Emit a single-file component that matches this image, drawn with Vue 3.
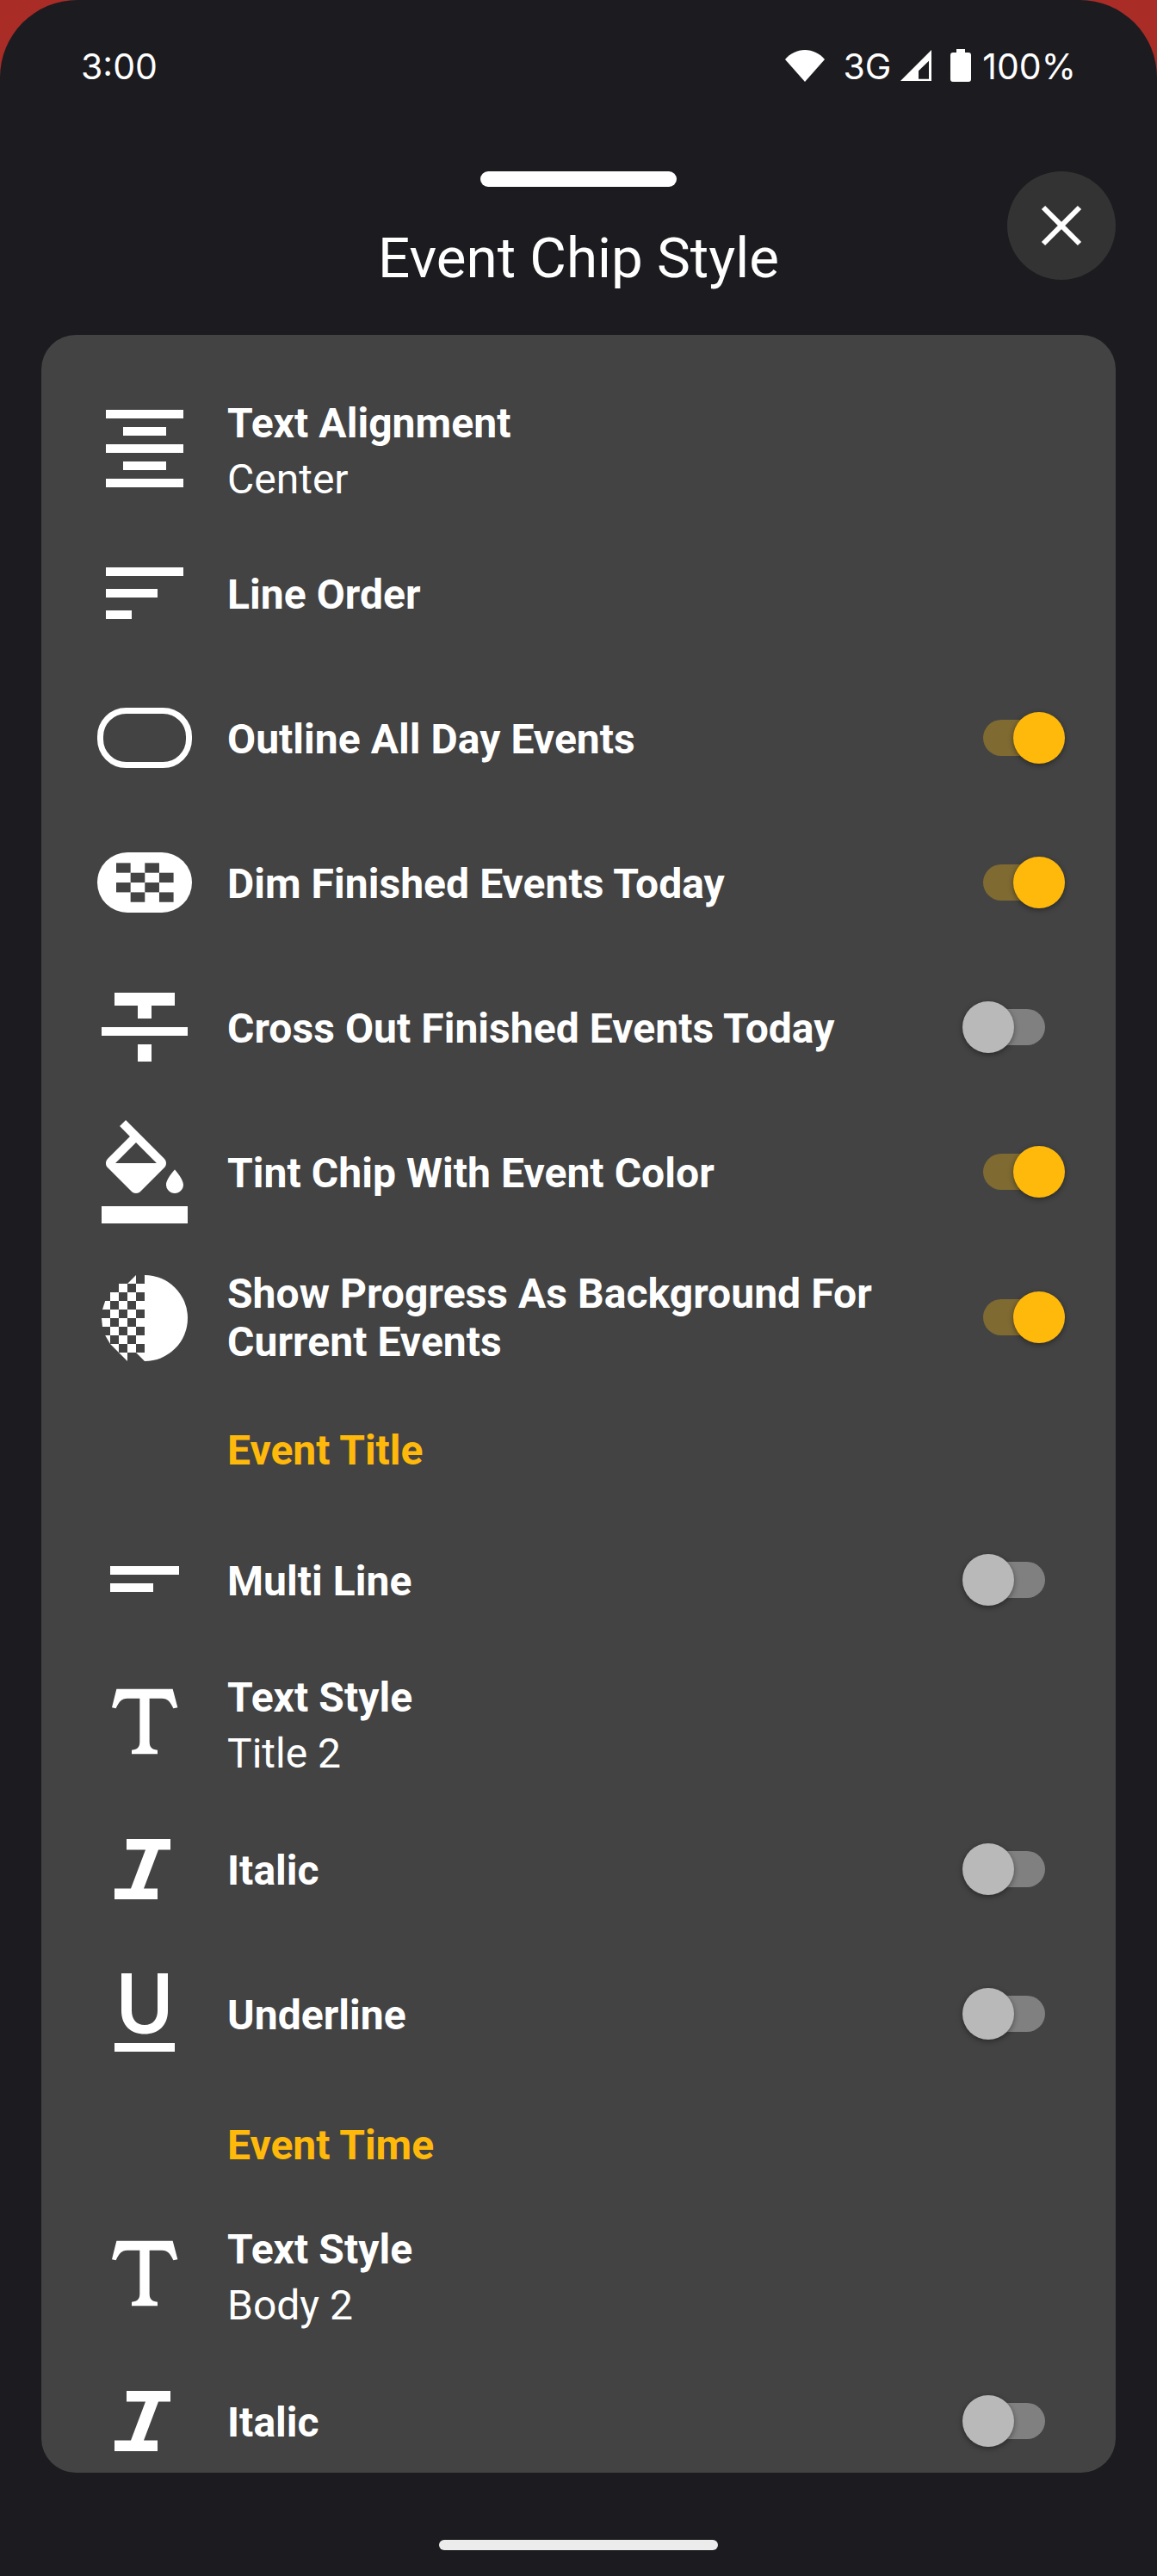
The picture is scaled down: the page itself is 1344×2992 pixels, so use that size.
<template>
  <div class="page">
    <div class="screen">
      <!-- status bar -->
      <div class="status-bar">
        <span class="status-text">3:00</span>
        <div class="status-right">
          <svg class="wifi" width="46" height="37" viewBox="0 0 46 37">
            <path d="M23 37 0 11C6 4 14 0 23 0s17 4 23 11z" />
          </svg>
          <span class="status-text net">3G</span>
          <svg class="signal" width="37" height="37" viewBox="0 0 37 37">
            <path fill-rule="evenodd" d="M0 36 36 0v36zM21 33.700h12V12.700L21 24.300z" />
          </svg>
          <svg class="battery" width="24" height="38" viewBox="0 0 24 38">
            <path d="M7 0h10v4h4a3 3 0 0 1 3 3v28a3 3 0 0 1-3 3H3a3 3 0 0 1-3-3V7a3 3 0 0 1 3-3h4z" />
          </svg>
          <span class="status-text">100%</span>
        </div>
      </div>

      <!-- sheet header -->
      <div class="sheet-header">
        <div class="drag-handle"></div>
        <div class="sheet-title">Event Chip Style</div>
        <div class="close-btn">
          <svg width="48" height="48" viewBox="0 0 48 48">
            <path class="close-x" d="M3 3l42 42M45 3 3 45" />
          </svg>
        </div>
      </div>

      <div class="card">
        <template v-for="row in rows" :key="row.title">
          <div v-if="row.section" class="section-label" :class="{ 'section-wide': row.wide }">{{ row.title }}</div>
          <div v-else class="row" :class="{ 'row-tall': row.tall }">
            <svg class="row-icon" width="120" height="120" viewBox="0 0 24 24">
              <rect
                v-if="row.icon === 'outline'"
                class="outline-shape"
                x="1.7"
                y="5.7"
                width="20.600"
                height="12.600"
                rx="6"
              />
              <g v-else-if="row.icon === 'dim'">
                <rect x="1" y="5" width="22" height="14" rx="7" />
                <rect
                  v-for="c in dimCells"
                  :key="c.x + '-' + c.y"
                  class="cell-dark"
                  :x="c.x"
                  :y="c.y"
                  width="3.330"
                  height="2.270"
                />
              </g>
              <g v-else-if="row.icon === 'progress'">
                <path d="M12 2a10 10 0 0 1 0 20z" />
                <path
                  v-for="c in progressCells"
                  :key="c.x + '-' + c.y"
                  :d="c.d"
                />
              </g>
              <path v-else :d="icons[row.icon]" />
            </svg>
            <div class="row-text">
              <div class="row-title">{{ row.title }}</div>
              <div v-if="row.sub" class="row-sub">{{ row.sub }}</div>
            </div>
            <div v-if="row.toggle" class="switch" :class="row.toggle">
              <div class="thumb"></div>
            </div>
          </div>
        </template>
      </div>

      <div class="home-indicator"></div>
    </div>
  </div>
</template>

<script setup>
const icons = {
  align: 'M7 15v2h10v-2H7zm-4 6h18v-2H3v2zm0-8h18v-2H3v2zm4-6v2h10V7H7zM3 3v2h18V3H3z',
  sort: 'M3 18h6v-2H3v2zM3 6v2h18V6H3zm0 7h12v-2H3v2z',
  strike: 'M10.400 20h3.200v-4h-3.200zM5 4v3h5.400v3h3.200V7H19V4zM2 14h20v-2H2z',
  fill: 'M16.56 8.94L7.62 0 6.21 1.41l2.38 2.38-5.15 5.15c-.59.59-.59 1.54 0 2.12l5.5 5.5c.29.29.68.44 1.06.44s.77-.15 1.06-.44l5.5-5.5c.59-.58.59-1.53 0-2.12zM5.21 10L10 5.21 14.79 10H5.21zM19 11.500s-2 2.170-2 3.500c0 1.100.9 2 2 2s2-.9 2-2c0-1.330-2-3.500-2-3.500zM2 20h20v4H2z',
  multi: 'M4 8.800h16v2H4zM4 12.800h10v2H4z',
  serif: 'M5.470 3.730H18.530L19.670 8.070 18.670 8.270C18 6.800 17.400 5.930 16 5.930H13.130V16C13.130 17.200 13.600 17.800 15 17.930V18.870H9V17.930C10.400 17.800 10.870 17.200 10.870 16V5.930H8C6.600 5.930 6 6.800 5.330 8.270L4.400 8.070Z',
  italic: 'M7.800 5H18v2.500h-2.800L11.800 16.500H15V19H5v-2.500h3.800L12.200 7.500H7.800z',
  underline: 'M6.600 2.600v8.700c0 3.400 2.200 5.400 5.400 5.400s5.400-2 5.400-5.400V2.600h-2.400v8.700c0 2-1.100 3.300-3 3.300s-3-1.300-3-3.300V2.600zM5 18.800h14v2H5z'
}

const rows = [
  { icon: 'align', title: 'Text Alignment', sub: 'Center' },
  { icon: 'sort', title: 'Line Order' },
  { icon: 'outline', title: 'Outline All Day Events', toggle: 'on' },
  { icon: 'dim', title: 'Dim Finished Events Today', toggle: 'on' },
  { icon: 'strike', title: 'Cross Out Finished Events Today', toggle: 'off' },
  { icon: 'fill', title: 'Tint Chip With Event Color', toggle: 'on' },
  { icon: 'progress', title: 'Show Progress As Background For Current Events', toggle: 'on', tall: true },
  { section: true, title: 'Event Title' },
  { icon: 'multi', title: 'Multi Line', toggle: 'off' },
  { icon: 'serif', title: 'Text Style', sub: 'Title 2' },
  { icon: 'italic', title: 'Italic', toggle: 'off' },
  { icon: 'underline', title: 'Underline', toggle: 'off' },
  { section: true, wide: true, title: 'Event Time' },
  { icon: 'serif', title: 'Text Style ', sub: 'Body 2' },
  { icon: 'italic', title: 'Italic ', toggle: 'off' }
]

// dark squares cut out of the dim pill
const dimCells = []
for (let r = 0; r < 4; r++) {
  for (let c = 0; c < 4; c++) {
    if ((r + c) % 2 === 0) {
      dimCells.push({ x: 5.4 + c * 3.33, y: 7.47 + r * 2.27 })
    }
  }
}

// left half of the progress disc: squares clipped by hand to the circle
const progressCells = []
for (let r = 0; r < 10; r++) {
  for (let c = 0; c < 5; c++) {
    if ((r + c) % 2 !== 1) continue
    const x = 2 + c * 2
    const y = 2 + r * 2
    const edge = (py) => 12 - Math.sqrt(Math.max(0, 100 - (py - 12) * (py - 12)))
    const top = Math.max(x, edge(y))
    const bottom = Math.max(x, edge(y + 2))
    if (top >= x + 2 && bottom >= x + 2) continue
    const t = Math.min(top, x + 2)
    const b = Math.min(bottom, x + 2)
    progressCells.push({ x, y, d: `M${t} ${y}H${x + 2}V${y + 2}H${b}Z` })
  }
}
</script>

<style scoped>
.page {
  width: 1344px;
  height: 2992px;
  background: #a92c27;
  overflow: hidden;
}

.screen {
  height: 2992px;
  background: #1c1b1f;
  border-radius: 90px 90px 0 0;
  display: flex;
  flex-direction: column;
  font-family: Roboto, "Liberation Sans", sans-serif;
  color: #fff;
}

svg {
  display: block;
  flex-shrink: 0;
  fill: #fff;
}

/* status bar */
.status-bar {
  height: 152px;
  padding: 0 94px 0 94px;
  display: flex;
  align-items: center;
  justify-content: space-between;
}

.status-right {
  display: flex;
  align-items: center;
}

.status-text {
  font-family: Inter, Roboto, sans-serif;
  font-size: 41px;
  line-height: 48px;
  padding-top: 2px;
}

.net {
  margin: 0 11px 0 21px;
}

.battery {
  margin: 0 13px 0 21px;
}

/* sheet header */
.sheet-header {
  position: relative;
  display: flex;
  flex-direction: column;
  align-items: center;
  padding-top: 47px;
}

.drag-handle {
  width: 228px;
  height: 18px;
  background: #fff;
  border-radius: 9px;
}

.sheet-title {
  margin-top: 45px;
  font-size: 65.5px;
  line-height: 76px;
  font-weight: 400;
}

.close-btn {
  position: absolute;
  top: 47px;
  right: 48px;
  width: 126px;
  height: 126px;
  border-radius: 50%;
  background: #333333;
  display: flex;
  align-items: center;
  justify-content: center;
}

.close-x {
  fill: none;
  stroke: #fff;
  stroke-width: 6;
}

/* settings card */
.card {
  margin: 51px 48px 0;
  height: 2483px;
  padding-top: 48px;
  box-sizing: border-box;
  background: #434343;
  border-radius: 40px;
  overflow: hidden;
  flex-shrink: 0;
}

.row {
  height: 168px;
  padding: 0 82px 0 60px;
  display: flex;
  align-items: center;
  gap: 36px;
}

.row-tall {
  height: 172px;
}

.row-tall .row-text {
  padding-top: 0;
  margin-top: -1px;
}

.row-tall .switch {
  margin-top: -3px;
}

.row:first-child .row-text {
  padding-top: 7px;
}

.row-icon {
  overflow: visible;
}

.outline-shape {
  fill: none;
  stroke: #fff;
  stroke-width: 1.4;
}

.cell-dark {
  fill: #434343;
}

.row-text {
  flex: 1;
  min-width: 0;
  padding-top: 3px;
}

.row-title {
  font-size: 48px;
  line-height: 56px;
  font-weight: 700;
  letter-spacing: 0.05px;
}

.row-sub {
  margin-top: 9px;
  font-size: 48px;
  line-height: 56px;
  font-weight: 400;
}

.section-label {
  height: 134px;
  padding-left: 216px;
  display: flex;
  align-items: center;
  font-size: 48px;
  font-weight: 700;
  color: #ffb90b;
}

.section-wide {
  height: 137px;
}

/* toggles */
.switch {
  position: relative;
  width: 72px;
  height: 42px;
  border-radius: 21px;
  flex-shrink: 0;
}

.switch.on {
  background: #7f6a32;
}

.switch.off {
  background: #808080;
}

.thumb {
  position: absolute;
  top: -9px;
  width: 60px;
  height: 60px;
  border-radius: 50%;
  box-shadow: 0 2px 6px rgba(0, 0, 0, 0.4);
}

.on .thumb {
  right: -23px;
  background: #ffb90b;
}

.off .thumb {
  left: -24px;
  background: #b9b9b9;
}

.home-indicator {
  align-self: center;
  margin-top: 78px;
  width: 324px;
  height: 12px;
  border-radius: 6px;
  background: #ececec;
}
</style>

<style>
body {
  margin: 0;
}
</style>
